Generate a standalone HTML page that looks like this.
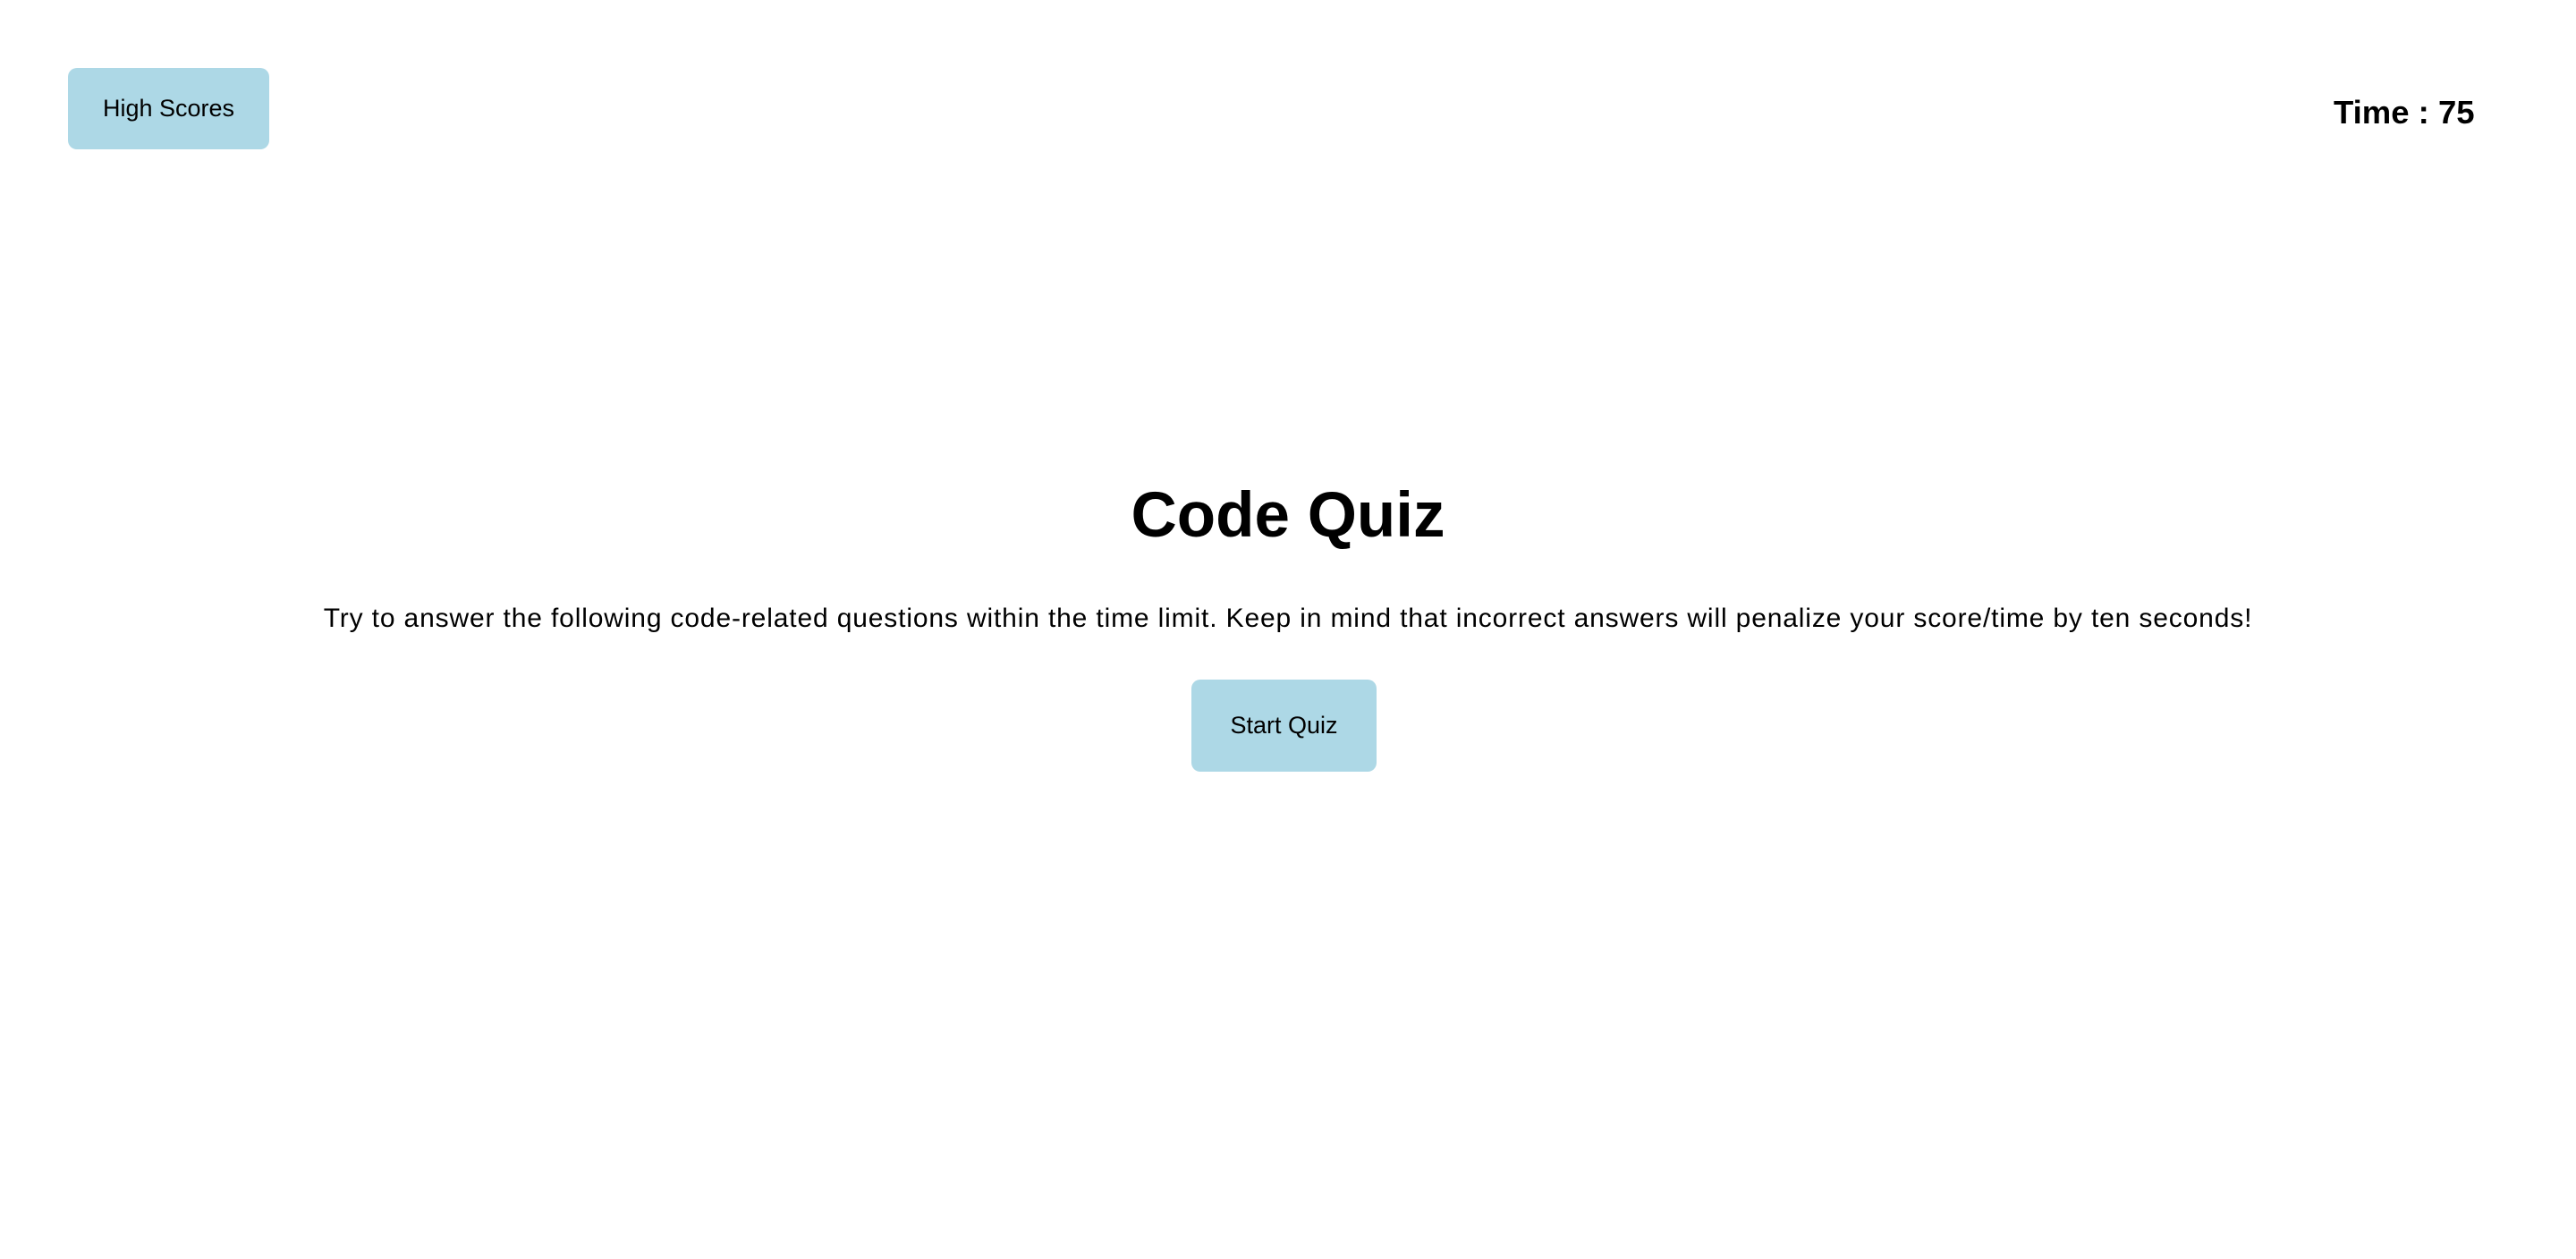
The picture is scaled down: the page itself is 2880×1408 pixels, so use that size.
<!DOCTYPE html>
<html><head><meta charset="utf-8"><style>
html,body{margin:0;padding:0;background:#fff;width:2880px;height:1408px;overflow:hidden;font-family:"Liberation Sans",Arial,sans-serif;color:#000}
.btn{position:absolute;background:#add8e6;border-radius:10px;display:flex;align-items:center;justify-content:center;font-size:27px}
#hs{left:76px;top:76px;width:225px;height:91px}
#time{position:absolute;left:2609px;top:104px;font-size:36.5px;font-weight:bold;line-height:44px;white-space:nowrap}
h1{position:absolute;left:0;width:2880px;top:536px;margin:0;text-align:center;font-size:71px;line-height:82px;font-weight:bold}
p{position:absolute;left:0;width:2880px;top:673px;margin:0;text-align:center;font-size:30px;line-height:38px;white-space:nowrap;letter-spacing:0.85px}
#sq{left:1332px;top:760px;width:207px;height:103px}
</style></head><body>
<div class="btn" id="hs">High Scores</div>
<div id="time">Time : 75</div>
<h1>Code Quiz</h1>
<p>Try to answer the following code-related questions within the time limit. Keep in mind that incorrect answers will penalize your score/time by ten seconds!</p>
<div class="btn" id="sq">Start Quiz</div>
</body></html>
